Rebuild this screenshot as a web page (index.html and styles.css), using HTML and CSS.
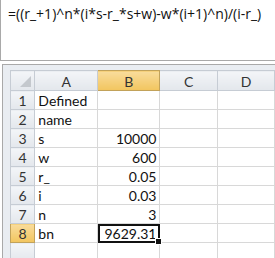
FILE: index.html
```html
<!DOCTYPE html>
<html lang="en">
<head>
    <meta charset="UTF-8">
    <title>Named formula</title>
    <link rel="stylesheet" href="styles.css">
</head>
<body>
    <div class="formula-bar">=((r_+1)^n*(i*s-r_*s+w)-w*(i+1)^n)/(i-r_)</div>
    <div class="sheet">
        <table class="grid">
            <thead>
                <tr>
                    <th class="corner"><span class="tri"></span></th>
                    <th class="col-a">A</th>
                    <th class="col-b active">B</th>
                    <th class="col-c">C</th>
                    <th class="col-d">D</th>
                </tr>
            </thead>
            <tbody>
                <tr><th>1</th><td>Defined</td><td></td><td></td><td></td></tr>
                <tr><th>2</th><td>name</td><td></td><td></td><td></td></tr>
                <tr><th>3</th><td>s</td><td class="num">10000</td><td></td><td></td></tr>
                <tr><th>4</th><td>w</td><td class="num">600</td><td></td><td></td></tr>
                <tr><th>5</th><td>r_</td><td class="num">0.05</td><td></td><td></td></tr>
                <tr><th>6</th><td>i</td><td class="num">0.03</td><td></td><td></td></tr>
                <tr><th>7</th><td>n</td><td class="num">3</td><td></td><td></td></tr>
                <tr><th class="active">8</th><td>bn</td><td class="num selected">9629.31<span class="handle"></span></td><td></td><td></td></tr>
                <!-- row 9 is cut off by the window, only its top edge shows -->
                <tr><th></th><td></td><td></td><td></td><td></td></tr>
            </tbody>
        </table>
    </div>
</body>
</html>
```
FILE: styles.css
```css
body {
    margin: 0;
    background-color: white;
    font-family: Lato, "Open Sans", sans-serif;
    overflow: hidden;
}
.formula-bar {
    height: 61px;
    border-left: 1px solid #a9a9a9;
    border-bottom: 1px solid #a9a9a9;
    padding: 4px 0 0 7px;
    box-sizing: border-box;
    font-family: "Open Sans", sans-serif;
    font-size: 14px;
    color: #111;
    white-space: nowrap;
}
.sheet {
    margin: 3px 0 0 2px;
    border-top: 1px solid #a9a9a9;
    border-left: 1px solid #a9a9a9;
    background-color: #e9edf2;
    padding: 5px 0 0 7px;
}
.grid {
    border-collapse: collapse;
    table-layout: fixed;
    background-color: white;
    font-size: 14px;
}
.grid th, .grid td {
    height: 19px;
    padding: 0 3px;
    border: 1px solid #d8d8d8;
    box-sizing: border-box;
    white-space: nowrap;
}
.grid th {
    font-weight: normal;
    color: #333;
    text-align: center;
    background: linear-gradient(#f3f5f8, #e3e7ec);
    border-color: #c6ccd4;
}
.grid thead th {
    height: 20px;
    padding-top: 1px;
}
.grid tbody th {
    width: 26px;
}
.corner {
    width: 26px;
    position: relative;
}
.tri {
    position: absolute;
    right: 3px;
    bottom: 3px;
    width: 0;
    height: 0;
    border-left: 11px solid transparent;
    border-bottom: 11px solid #c4c8cd;
}
.col-a { width: 64px; }
.col-b { width: 63px; }
.col-c { width: 65px; }
.col-d { width: 64px; }
.grid th.active {
    background: linear-gradient(#f9dc9c, #f2c55e);
    border-color: #c2a25a;
}
.grid td {
    color: #111;
    text-align: left;
}
.grid td.num {
    text-align: right;
}
.grid td.selected {
    position: relative;
    outline: 2px solid #111;
    outline-offset: -2px;
}
.handle {
    position: absolute;
    right: -3px;
    bottom: -3px;
    width: 5px;
    height: 5px;
    background-color: #111;
    border: 1px solid white;
}
```
